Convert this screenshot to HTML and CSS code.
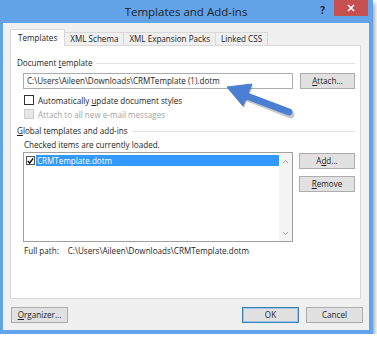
FILE: index.html
```html
<!DOCTYPE html>
<html lang="en">
<head>
  <meta charset="UTF-8">
  <title>Templates and Add-ins</title>
  <link rel="stylesheet" href="styles.css">
</head>
<body>
  <div class="window">
    <div class="titlebar">
      <div></div>
      <div class="title">Templates and Add-ins</div>
      <div class="controls">
        <span class="help">?</span>
        <span class="close">
          <svg width="8" height="8" viewBox="0 0 8 8"><path d="M1 1L7 7M7 1L1 7" stroke="#fff" stroke-width="1.6"/></svg>
        </span>
      </div>
    </div>

    <div class="body">
      <div class="tabs">
        <div class="tab active">Templates</div>
        <div class="tab">XML Schema</div>
        <div class="tab">XML Expansion Packs</div>
        <div class="tab">Linked CSS</div>
      </div>

      <div class="panel">
        <div class="group-title"><span>Document <u>t</u>emplate</span></div>
        <div class="field-row">
          <div class="textbox">C:\Users\Aileen\Downloads\CRMTemplate (1).dotm</div>
          <button class="btn"><u>A</u>ttach...</button>
        </div>
        <label class="check-row">
          <span class="checkbox"></span>
          <span>Automatically <u>u</u>pdate document styles</span>
        </label>
        <label class="check-row disabled">
          <span class="checkbox"></span>
          <span>Attach to all new e-mail messages</span>
        </label>

        <div class="group-title second"><span><u>G</u>lobal templates and add-ins</span></div>
        <div class="hint">Checked items are currently loaded.</div>
        <div class="list-row">
          <div class="listbox">
            <div class="list-items">
              <div class="list-item">
                <span class="checkbox checked">
                  <svg width="8" height="8" viewBox="0 0 8 8"><path d="M1 4L3 6.5L7 1" fill="none" stroke="#000" stroke-width="1.6"/></svg>
                </span>
                <span class="item-text">CRMTemplate.dotm</span>
              </div>
            </div>
            <div class="scrollbar">
              <svg width="7" height="5" viewBox="0 0 7 5"><path d="M1 4L3.5 1.5L6 4" fill="none" stroke="#a8a8a8" stroke-width="1"/></svg>
              <svg width="7" height="5" viewBox="0 0 7 5"><path d="M1 1L3.5 3.5L6 1" fill="none" stroke="#a8a8a8" stroke-width="1"/></svg>
            </div>
          </div>
          <div class="side-buttons">
            <button class="btn">A<u>d</u>d...</button>
            <button class="btn"><u>R</u>emove</button>
          </div>
        </div>
        <div class="full-path">
          <span class="fp-label">Full path:</span>
          <span>C:\Users\Aileen\Downloads\CRMTemplate.dotm</span>
        </div>
      </div>

      <div class="footer">
        <button class="btn wide"><u>O</u>rganizer...</button>
        <div class="footer-right">
          <button class="btn wide default">OK</button>
          <button class="btn wide">Cancel</button>
        </div>
      </div>
    </div>
  </div>

  <!-- annotation arrow drawn over the screenshot -->
  <svg class="arrow" width="377" height="340" viewBox="0 0 377 340">
    <g fill="rgba(0,0,0,0.22)" stroke="rgba(0,0,0,0.22)">
      <line x1="245" y1="97" x2="291" y2="115" stroke-width="7" stroke-linecap="round"/>
      <polygon points="228,89 253,86 244,108" stroke="none"/>
    </g>
    <g fill="#4a7fd3" stroke="#4a7fd3">
      <line x1="244" y1="95" x2="289" y2="112" stroke-width="7" stroke-linecap="round"/>
      <polygon points="227,87 252,84 243,106" stroke-width="1" stroke-linejoin="round"/>
    </g>
  </svg>
</body>
</html>
```

FILE: styles.css
```css
body {
  margin: 0;
  background: #fff;
  font-family: "Open Sans", "Liberation Sans", sans-serif;
  font-size: 8.1px;
  color: #1e1e1e;
  position: relative;
}
.window {
  width: 373px;
  height: 334px;
  box-sizing: border-box;
  background: #62a3ea;
  padding: 0 4px 4px 3px;
  box-shadow: 2px 3px 4px rgba(0, 0, 0, 0.35);
  display: flex;
  flex-direction: column;
}
.titlebar {
  height: 23px;
  display: grid;
  grid-template-columns: 1fr auto 1fr;
}
.title {
  font-size: 11.5px;
  line-height: 23px;
  color: #1f1f1f;
}
.controls {
  display: flex;
  justify-content: flex-end;
  align-items: flex-start;
}
.help {
  font-size: 10px;
  font-weight: bold;
  color: #222;
  margin-top: 3px;
  margin-right: 9px;
}
.close {
  width: 34px;
  height: 16px;
  background: #c75050;
  display: flex;
  justify-content: center;
  align-items: center;
  margin-right: 1px;
}
.body {
  flex: 1;
  background: #f0f0f0;
  padding: 6px 8px 0 7px;
  display: flex;
  flex-direction: column;
}
.tabs {
  display: flex;
  align-items: flex-end;
  height: 16px;
  position: relative;
  z-index: 1;
}
.tab {
  height: 13px;
  line-height: 12px;
  box-sizing: border-box;
  border: 1px solid #d9d9d9;
  border-bottom: none;
  border-left: none;
  background: #f0f0f0;
  padding: 0 5px;
  color: #222;
}
.tab.active {
  height: 17px;
  margin-bottom: -1px;
  line-height: 16px;
  background: #fff;
  border-left: 1px solid #d9d9d9;
  padding: 0 7px;
}
.panel {
  height: 254px;
  box-sizing: border-box;
  background: #fff;
  border: 1px solid #d9d9d9;
  padding: 11px 5px 0 6px;
}
.group-title {
  display: flex;
  align-items: center;
  height: 12px;
  line-height: 12px;
}
.group-title::after {
  content: "";
  flex: 1;
  border-top: 1px solid #e3e3e3;
  margin-left: 4px;
}
.group-title.second {
  margin-top: 4px;
}
.field-row {
  display: flex;
  gap: 7px;
  margin: 4px 0 0 6px;
}
.textbox {
  width: 270px;
  height: 16px;
  box-sizing: border-box;
  border: 1px solid #abadb3;
  padding: 0 3px;
  line-height: 14px;
  white-space: nowrap;
  overflow: hidden;
}
.btn {
  width: 55px;
  height: 16px;
  box-sizing: border-box;
  border: 1px solid #adadad;
  background: #e1e1e1;
  font: inherit;
  color: #1e1e1e;
  padding: 0;
  line-height: 14px;
}
.btn.wide {
  width: 57px;
}
.btn.default {
  border-color: #3c7fb1;
  box-shadow: inset 0 0 0 1px #9cc6ec;
}
.check-row {
  display: flex;
  align-items: center;
  height: 14px;
  margin-left: 7px;
  gap: 4px;
}
.check-row:first-of-type {
  margin-top: 4px;
}
.checkbox {
  width: 10px;
  height: 10px;
  box-sizing: border-box;
  border: 1px solid #333;
  background: #fff;
  display: flex;
  align-items: center;
  justify-content: center;
}
.check-row.disabled {
  color: #a3a3a3;
}
.check-row.disabled .checkbox {
  border-color: #cdcdcd;
  background: #e6e6e6;
}
.hint {
  margin: 2px 0 0 7px;
  line-height: 12px;
}
.list-row {
  display: flex;
  gap: 6px;
  margin: 1px 0 0 6px;
}
.listbox {
  width: 270px;
  height: 90px;
  box-sizing: border-box;
  border: 1px solid #a0a0a0;
  display: flex;
}
.list-items {
  flex: 1;
  padding: 2px 0 0 2px;
}
.list-item {
  display: flex;
  align-items: center;
  gap: 1px;
  height: 11px;
}
.list-item .checkbox {
  width: 9px;
  height: 9px;
  border-color: #555;
}
.item-text {
  flex: 1;
  background: #3399ff;
  color: #fff;
  height: 11px;
  line-height: 11px;
  padding-left: 1px;
}
.scrollbar {
  width: 13px;
  background: #f4f4f4;
  display: flex;
  flex-direction: column;
  justify-content: space-between;
  align-items: center;
  padding: 6px 0 5px;
  box-sizing: border-box;
}
.side-buttons {
  display: flex;
  flex-direction: column;
  gap: 7px;
  padding-top: 1px;
}
.side-buttons .btn {
  width: 56px;
}
.full-path {
  margin: 3px 0 0 7px;
  line-height: 12px;
  display: flex;
  gap: 9px;
}
.footer {
  display: flex;
  justify-content: space-between;
  margin-top: 8px;
  padding-left: 1px;
}
.footer-right {
  display: flex;
  gap: 7px;
  margin-right: -2px;
}
.arrow {
  position: absolute;
  left: 0;
  top: 0;
}
```
